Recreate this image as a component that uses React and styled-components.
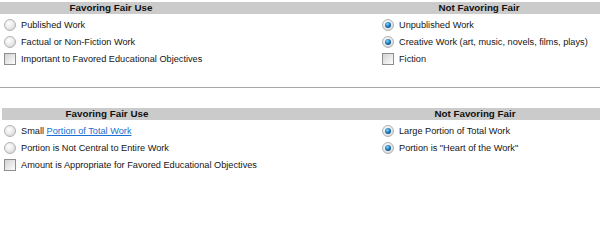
import React from "react";
import styled, { createGlobalStyle } from "styled-components";

const GlobalStyle = createGlobalStyle`
	body {
		margin: 0;
		background: #ffffff;
		font-family: "Liberation Sans", Arial, sans-serif;
		color: #1a1a1a;
	}
`;

const sections = [
	{
		left: { title: "Favoring Fair Use", width: 222 },
		right: { title: "Not Favoring Fair", start: 358 },
		leftItems: [
			{ type: "radio", label: "Published Work" },
			{ type: "radio", label: "Factual or Non-Fiction Work" },
			{ type: "check", label: "Important to Favored Educational Objectives" },
		],
		rightItems: [
			{ type: "radio", checked: true, label: "Unpublished Work" },
			{ type: "radio", checked: true, label: "Creative Work (art, music, novels, films, plays)" },
			{ type: "check", label: "Fiction" },
		],
	},
	{
		left: { title: "Favoring Fair Use", width: 210 },
		right: { title: "Not Favoring Fair", start: 348 },
		leftItems: [
			{ type: "radio", label: "Small ", link: "Portion of Total Work" },
			{ type: "radio", label: "Portion is Not Central to Entire Work" },
			{ type: "check", label: "Amount is Appropriate for Favored Educational Objectives" },
		],
		rightItems: [
			{ type: "radio", checked: true, label: "Large Portion of Total Work" },
			{ type: "radio", checked: true, label: 'Portion is "Heart of the Work"' },
		],
	},
];

const Option = ({ item }) => (
	<Row>
		{item.type === "radio" ? <Radio $checked={item.checked} /> : <Check />}
		<Label>
			{item.label}
			{item.link && <Anchor href="#">{item.link}</Anchor>}
		</Label>
	</Row>
);

const App = () => {
	return (
		<Page>
			<GlobalStyle />
			{sections.map((s, i) => (
				<React.Fragment key={i}>
					{i > 0 && <Rule />}
					<Section>
						<HeaderBar $inset={i === 0 ? 0 : 2}>
							<HeadCell $width={s.left.width}>{s.left.title}</HeadCell>
							<HeadCell $gap={s.right.start - s.left.width} $grow>
								{s.right.title}
							</HeadCell>
						</HeaderBar>
						<Columns>
							<Column>
								{s.leftItems.map((it, j) => (
									<Option key={j} item={it} />
								))}
							</Column>
							<Column>
								{s.rightItems.map((it, j) => (
									<Option key={j} item={it} />
								))}
							</Column>
						</Columns>
					</Section>
				</React.Fragment>
			))}
		</Page>
	);
};

export default App;

const Page = styled.div`
	width: 600px;
	height: 250px;
	overflow: hidden;
	padding-top: 2px;
	box-sizing: border-box;
`;

const Section = styled.div`
	display: flex;
	flex-direction: column;
`;

const HeaderBar = styled.div`
	display: flex;
	height: 12px;
	margin-left: ${({ $inset }) => $inset}px;
	background: #cbcbcb;
	margin-bottom: 2px;
`;

const HeadCell = styled.div`
	width: ${({ $width }) => ($width ? `${$width}px` : "auto")};
	flex: ${({ $grow }) => ($grow ? 1 : "none")};
	margin-left: ${({ $gap }) => $gap || 0}px;
	font-size: 9.8px;
	font-weight: bold;
	line-height: 12px;
	text-align: center;
	color: #111;
	white-space: nowrap;
`;

const Columns = styled.div`
	display: grid;
	grid-template-columns: 378px 1fr;
`;

const Column = styled.div`
	display: flex;
	flex-direction: column;
	padding-left: 4px;
`;

const Row = styled.div`
	display: flex;
	align-items: center;
	height: 17px;
	white-space: nowrap;
`;

const Radio = styled.span`
	position: relative;
	width: 12px;
	height: 12px;
	border-radius: 50%;
	box-sizing: border-box;
	border: 1px solid #b2b2b2;
	background: radial-gradient(circle at 40% 35%, #ffffff 0, #ececec 45%, #cdcdcd 100%);
	flex-shrink: 0;

	&::after {
		content: "";
		display: ${({ $checked }) => ($checked ? "block" : "none")};
		position: absolute;
		left: 2px;
		top: 2px;
		width: 6px;
		height: 6px;
		border-radius: 50%;
		background: radial-gradient(circle at 40% 35%, #8ad8ff 0, #1d7cc0 45%, #05375f 100%);
	}
`;

const Check = styled.span`
	width: 12px;
	height: 12px;
	box-sizing: border-box;
	border: 1px solid #8e8e8e;
	background: linear-gradient(135deg, #d2d2d2 0, #f0f0f0 70%, #ffffff 100%);
	flex-shrink: 0;
`;

const Label = styled.span`
	margin-left: 5px;
	font-size: 9.2px;
	color: #151515;
`;

const Anchor = styled.a`
	color: #1a6fd0;
	text-decoration: underline;
`;

const Rule = styled.div`
	height: 1px;
	background: #a6a6a6;
	margin: 20px 0 20px 0;
`;
